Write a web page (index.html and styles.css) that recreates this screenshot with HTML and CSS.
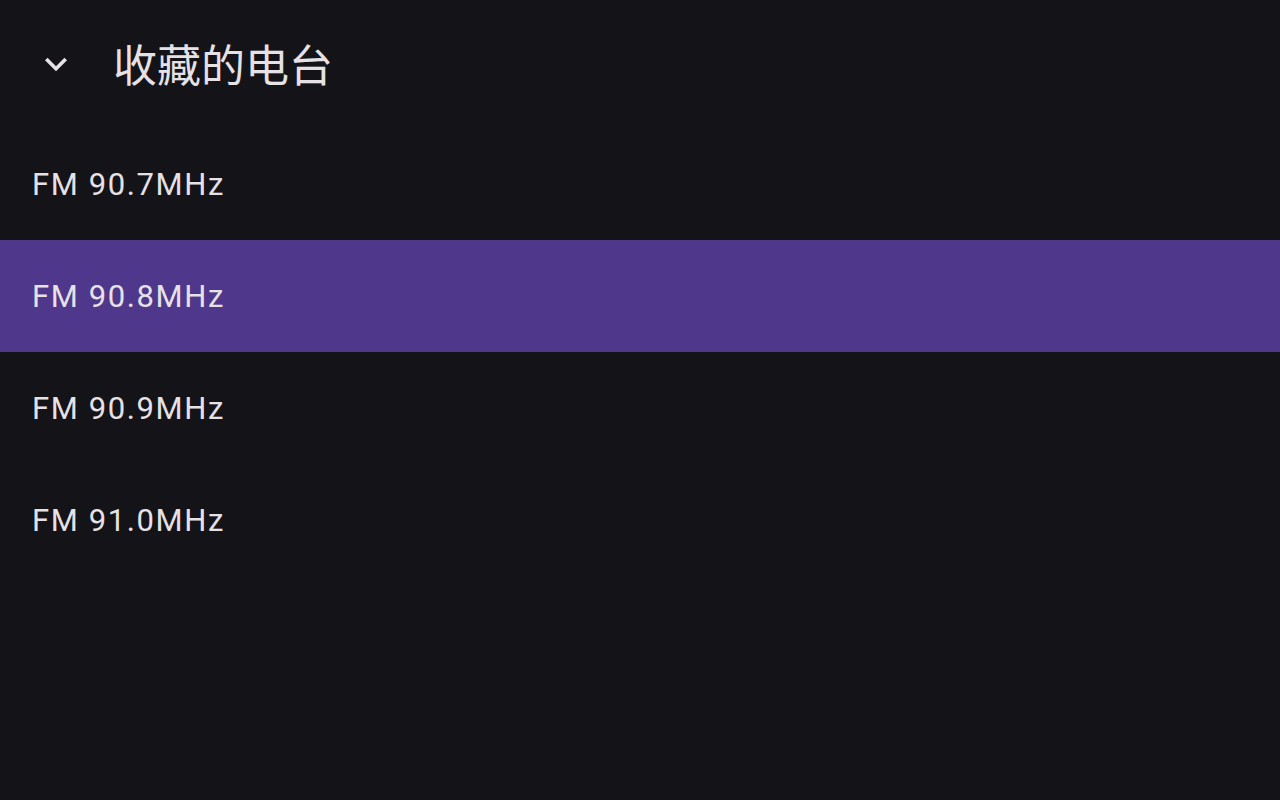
FILE: index.html
```html
<!DOCTYPE html>
<html lang="zh">
<head>
<meta charset="utf-8">
<link rel="stylesheet" href="styles.css">
</head>
<body>
<div class="page">
  <header class="header">
    <svg class="chevron" viewBox="0 0 24 24" width="44" height="44"><path fill="#e6e1e5" d="M16.59 8.59L12 13.17 7.41 8.59 6 10l6 6 6-6z"/></svg>
    <h1 class="title">收藏的电台</h1>
  </header>
  <ul class="list">
    <li class="item">FM 90.7MHz</li>
    <li class="item selected">FM 90.8MHz</li>
    <li class="item">FM 90.9MHz</li>
    <li class="item">FM 91.0MHz</li>
  </ul>
</div>
</body>
</html>
```
FILE: styles.css
```css
html, body {
  margin: 0;
  padding: 0;
  background: #141318;
}
.page {
  width: 1280px;
  height: 800px;
  background: #141318;
  color: #e6e1e5;
  font-family: Roboto, "Noto Sans CJK SC", sans-serif;
}
.header {
  height: 128px;
  display: flex;
  align-items: center;
  padding-left: 34px;
  box-sizing: border-box;
}
.chevron {
  display: block;
  flex: none;
}
.title {
  margin: 0 0 2px 35px;
  font-family: "Noto Sans CJK SC", sans-serif;
  font-size: 44px;
  font-weight: 400;
  line-height: 1;
  color: #e6e1e5;
}
.list {
  list-style: none;
  margin: 0;
  padding: 0;
}
.item {
  height: 112px;
  display: flex;
  align-items: center;
  padding-left: 32px;
  font-size: 31px;
  letter-spacing: 1.6px;
}
.item.selected {
  background: #4f378b;
}
```
